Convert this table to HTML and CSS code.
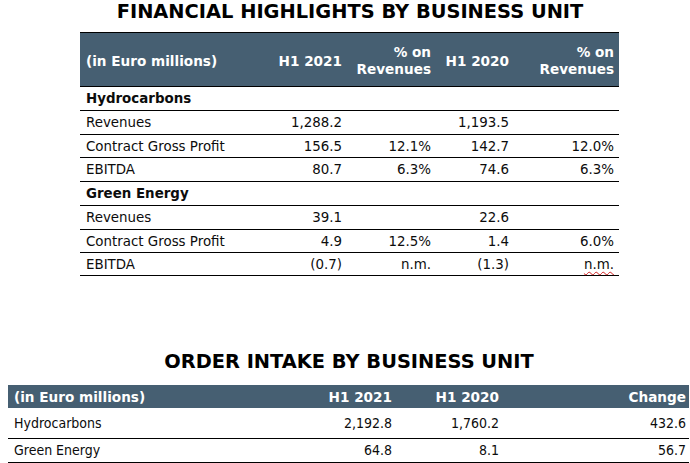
FILE: index.html
```html
<!DOCTYPE html>
<html lang="en">
<head>
<meta charset="utf-8">
<title>Financial highlights</title>
<link rel="stylesheet" href="styles.css">
</head>
<body>
<div class="page">
  <h1 class="title title-first">FINANCIAL HIGHLIGHTS BY BUSINESS UNIT</h1>
  <table class="fin">
    <colgroup>
      <col class="c1"><col class="c2"><col class="c3"><col class="c4"><col class="c5">
    </colgroup>
    <thead>
      <tr>
        <th class="lbl">(in Euro millions)</th>
        <th>H1 2021</th>
        <th>% on<br>Revenues</th>
        <th>H1 2020</th>
        <th>% on<br>Revenues</th>
      </tr>
    </thead>
    <tbody>
      <tr class="sec"><td colspan="5">Hydrocarbons</td></tr>
      <tr><td class="lbl">Revenues</td><td>1,288.2</td><td></td><td>1,193.5</td><td></td></tr>
      <tr class="tight"><td class="lbl">Contract Gross Profit</td><td>156.5</td><td>12.1%</td><td>142.7</td><td>12.0%</td></tr>
      <tr><td class="lbl">EBITDA</td><td>80.7</td><td>6.3%</td><td>74.6</td><td>6.3%</td></tr>
      <tr class="sec"><td colspan="5">Green Energy</td></tr>
      <tr><td class="lbl">Revenues</td><td>39.1</td><td></td><td>22.6</td><td></td></tr>
      <tr class="tight"><td class="lbl">Contract Gross Profit</td><td>4.9</td><td>12.5%</td><td>1.4</td><td>6.0%</td></tr>
      <tr class="tight"><td class="lbl">EBITDA</td><td>(0.7)</td><td>n.m.</td><td>(1.3)</td><td><span class="spell">n.m.</span></td></tr>
    </tbody>
  </table>

  <h1 class="title title-second">ORDER INTAKE BY BUSINESS UNIT</h1>
  <table class="ord">
    <colgroup>
      <col class="d1"><col class="d2"><col class="d3"><col class="d4">
    </colgroup>
    <thead>
      <tr>
        <th class="lbl">(in Euro millions)</th>
        <th>H1 2021</th>
        <th>H1 2020</th>
        <th>Change</th>
      </tr>
    </thead>
    <tbody>
      <tr class="r1"><td class="lbl">Hydrocarbons</td><td>2,192.8</td><td>1,760.2</td><td>432.6</td></tr>
      <tr class="r2"><td class="lbl">Green Energy</td><td>64.8</td><td>8.1</td><td>56.7</td></tr>
    </tbody>
  </table>
</div>
</body>
</html>
```

FILE: styles.css
```css
html, body {
  margin: 0;
  padding: 0;
  background: #ffffff;
}

.page {
  width: 690px;
  height: 463px;
  overflow: hidden;
  color: #0c0c0c;
  font-family: "DejaVu Sans", Verdana, sans-serif;
}

.title {
  margin: 0;
  font-family: "DejaVu Sans", sans-serif;
  font-weight: bold;
  font-size: 19.4px;
  text-align: center;
  color: #000000;
  line-height: 23px;
}

.title-first {
  padding-left: 10px;
  height: 32px;
}

.title-second {
  padding-top: 74px;
  height: 35px;
  padding-left: 8px;
}

table {
  border-collapse: collapse;
  table-layout: fixed;
}

th {
  background: #465f72;
  color: #ffffff;
  font-family: "DejaVu Sans", sans-serif;
  font-weight: bold;
  font-size: 13.6px;
  text-align: right;
  padding: 0 5px 0 5px;
  white-space: nowrap;
}

th.lbl, td.lbl {
  text-align: left;
  padding-left: 6px;
}

td {
  text-align: right;
  padding: 0 5px;
  white-space: nowrap;
}

/* Financial highlights table */
.fin {
  margin-left: 80px;
  width: 539px;
  font-size: 13.4px;
}

.fin .c1 { width: 185px; }
.fin .c2 { width: 82px; }
.fin .c3 { width: 89px; }
.fin .c4 { width: 78px; }
.fin .c5 { width: 105px; }

.fin thead tr {
  height: 54px;
  border-top: 1px solid #000000;
  border-bottom: 1px solid #000000;
}

.fin th {
  line-height: 17px;
  padding-top: 3px;
}

.fin tbody tr {
  height: 24px;
  border-bottom: 1px solid #000000;
}

.fin tbody tr.tight {
  height: 23px;
}

.fin tr.sec td {
  text-align: left;
  font-weight: bold;
  padding-left: 6px;
}

.spell {
  text-decoration: underline wavy #d02020;
  text-decoration-thickness: 1px;
  text-underline-offset: 2px;
}

/* Order intake table */
.ord {
  margin-left: 8px;
  width: 681px;
  font-family: "DejaVu Sans Condensed", "DejaVu Sans", sans-serif;
  font-size: 14px;
}

.ord .d1 { width: 306px; }
.ord .d2 { width: 81px; }
.ord .d3 { width: 107px; }
.ord .d4 { width: 187px; }

.ord thead tr {
  height: 23px;
}

.ord th {
  padding-right: 3px;
}

.ord td {
  padding-right: 3px;
}

.ord tr.r1 {
  height: 30px;
  border-bottom: 1px solid #000000;
}

.ord tr.r2 {
  height: 24px;
  border-bottom: 1px solid #000000;
}
```
